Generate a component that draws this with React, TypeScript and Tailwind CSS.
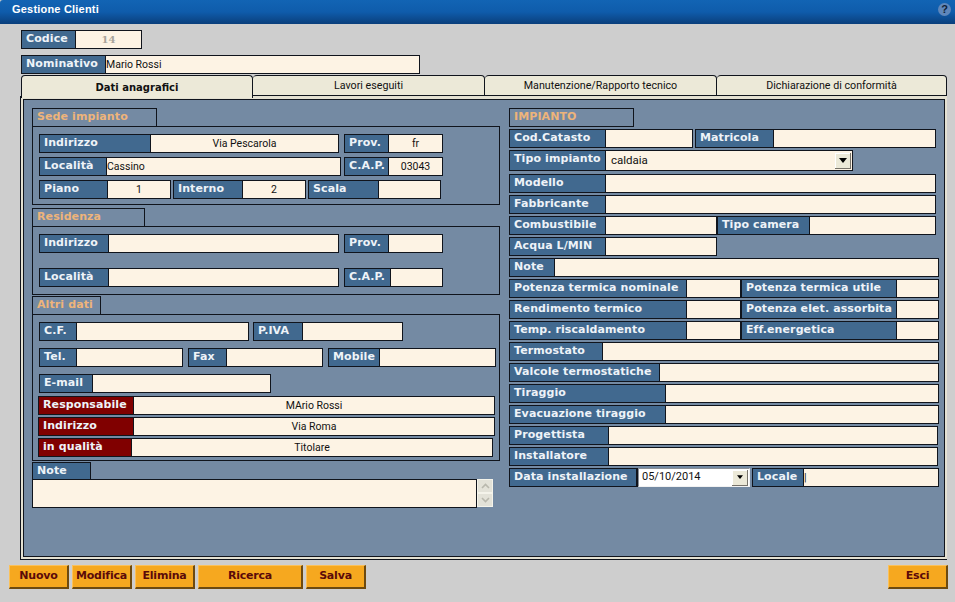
import type { ReactNode } from 'react'

type FieldProps = {
  label: string
  box: string
  labelW: string
  value?: string
  align?: string
  red?: boolean
  children?: ReactNode
}

function Field({ label, box, labelW, value, align = 'text-left', red, children }: FieldProps) {
  return (
    <div className={`flex h-[19px] shrink-0 border border-[#10141c] ${box}`}>
      <div
        className={`h-full shrink-0 border-r border-[#10141c] pl-1 font-['DejaVu_Sans'] text-[11px] leading-[15px] font-bold tracking-[0.1px] whitespace-nowrap text-[#eef3f8] ${labelW} ${red ? 'bg-[#800000]' : 'bg-[#41698f]'}`}
      >
        {label}
      </div>
      {children ?? (
        <div className={`h-full min-w-0 flex-1 truncate bg-[#fdf3e4] font-['Roboto'] text-[10.5px] leading-[17px] text-[#111] ${align}`}>
          {value}
        </div>
      )}
    </div>
  )
}

function SectionTitle({ children, className }: { children: ReactNode; className: string }) {
  return (
    <div className={`h-[19px] border border-[#10141c] pl-1 font-['DejaVu_Sans'] text-[11px] leading-[15px] font-bold tracking-[0.1px] text-[#eeb47a] ${className}`}>
      {children}
    </div>
  )
}

function Tab({ label, active, className }: { label: string; active?: boolean; className: string }) {
  return (
    <div
      className={`flex items-center justify-center rounded-t-[4px] border-t border-r border-[#10141c] bg-[#ece9d8] pt-px text-[#111] ${active ? "h-[23px] border-l font-['DejaVu_Sans'] text-[10px] font-bold" : "h-[21px] border-b font-['Roboto'] text-[10.7px]"} ${className}`}
    >
      {label}
    </div>
  )
}

function ActionButton({ label, className }: { label: string; className: string }) {
  return (
    <button className={`h-[24px] border-t border-l border-t-[#fbc15a] border-l-[#fbc15a] border-r-2 border-b-2 border-r-[#6d4a10] border-b-[#6d4a10] bg-[#f6a81f] font-['DejaVu_Sans'] text-[11px] font-bold tracking-[-0.2px] text-[#5b0a0a] ${className}`}>
      {label}
    </button>
  )
}

function DropArrow({ small }: { small?: boolean }) {
  return (
    <div className="flex h-[16px] w-[16px] items-center justify-center border-r border-b border-r-[#77736a] border-b-[#77736a] bg-[#ece9d8] shadow-[inset_1px_1px_0_#fff]">
      <svg width={small ? 6 : 8} height={small ? 4 : 5} viewBox="0 0 8 5">
        <path d="M0 0h8L4 5z" fill="#000" />
      </svg>
    </div>
  )
}

function ScrollArrow({ up }: { up?: boolean }) {
  return (
    <div className="flex h-[14px] w-[16px] items-center justify-center border border-[#f4f3ea] bg-[#e3e2d8]">
      <svg width="9" height="6" viewBox="0 0 9 6" fill="none">
        <path d={up ? 'M1 5l3.5-3.5L8 5' : 'M1 1l3.5 3.5L8 1'} stroke="#b9b8ad" strokeWidth="1.6" />
      </svg>
    </div>
  )
}

function LeftColumn() {
  return (
    <div className="w-[468px] shrink-0">
      <SectionTitle className="w-[125px]">Sede impianto</SectionTitle>
      <div className="-mt-px h-[79px] border border-[#10141c] pt-[7px] pl-[6px]">
        <div className="flex">
          <Field label="Indirizzo" box="w-[300px]" labelW="w-[111px]" value="Via Pescarola" align="text-center" />
          <Field label="Prov." box="ml-[5px] w-[99px]" labelW="w-[44px]" value="fr" align="text-center" />
        </div>
        <div className="mt-[4px] flex">
          <Field label="Località" box="w-[302px]" labelW="w-[67px]" value="Cassino" />
          <Field label="C.A.P." box="ml-[3px] w-[99px]" labelW="w-[44px]" value="03043" align="text-center" />
        </div>
        <div className="mt-[4px] flex">
          <Field label="Piano" box="w-[132px]" labelW="w-[68px]" value="1" align="text-center" />
          <Field label="Interno" box="ml-[2px] w-[133px]" labelW="w-[69px]" value="2" align="text-center" />
          <Field label="Scala" box="ml-[2px] w-[133px]" labelW="w-[70px]" />
        </div>
      </div>

      <SectionTitle className="mt-[3px] w-[113px]">Residenza</SectionTitle>
      <div className="-mt-px h-[69px] border border-[#10141c] pt-[7px] pl-[6px]">
        <div className="flex">
          <Field label="Indirizzo" box="w-[300px]" labelW="w-[69px]" />
          <Field label="Prov." box="ml-[5px] w-[99px]" labelW="w-[44px]" />
        </div>
        <div className="mt-[15px] flex">
          <Field label="Località" box="w-[300px]" labelW="w-[69px]" />
          <Field label="C.A.P." box="ml-[5px] w-[99px]" labelW="w-[46px]" />
        </div>
      </div>

      <SectionTitle className="mt-px w-[69px]">Altri dati</SectionTitle>
      <div className="-mt-px h-[147px] border border-[#10141c] pt-[7px] pl-[6px]">
        <div className="flex">
          <Field label="C.F." box="w-[210px]" labelW="w-[37px]" />
          <Field label="P.IVA" box="ml-[4px] w-[150px]" labelW="w-[49px]" />
        </div>
        <div className="mt-[7px] flex">
          <Field label="Tel." box="w-[144px]" labelW="w-[37px]" />
          <Field label="Fax" box="ml-[5px] w-[135px]" labelW="w-[38px]" />
          <Field label="Mobile" box="ml-[5px] w-[168px]" labelW="w-[51px]" />
        </div>
        <div className="mt-[7px]">
          <Field label="E-mail" box="w-[232px]" labelW="w-[53px]" />
        </div>
        <div className="mt-[3px] -ml-px">
          <Field red label="Responsabile" box="w-[457px]" labelW="w-[95px]" value="MArio Rossi" align="text-center" />
        </div>
        <div className="mt-[2px] -ml-px">
          <Field red label="Indirizzo" box="w-[457px]" labelW="w-[95px]" value="Via Roma" align="text-center" />
        </div>
        <div className="mt-[2px] -ml-px">
          <Field red label="in qualità" box="w-[455px]" labelW="w-[93px]" value="Titolare" align="text-center" />
        </div>
      </div>

      <SectionTitle className="mt-px !h-[18px] w-[59px] bg-[#41698f] !text-[#eef3f8]">Note</SectionTitle>
      <div className="-mt-px flex">
        <div className="h-[29px] w-[445px] border border-[#10141c] bg-[#fdf3e4]" />
        <div className="flex w-[17px] flex-col">
          <ScrollArrow up />
          <ScrollArrow />
        </div>
      </div>
    </div>
  )
}

function RightColumn() {
  const full = 'w-[427px]'
  const wide = 'w-[430px]'
  return (
    <div className="ml-[9px] w-[430px] shrink-0">
      <SectionTitle className="w-[125px]">IMPIANTO</SectionTitle>
      <div className="mt-[2px] flex">
        <Field label="Cod.Catasto" box="w-[184px]" labelW="w-[96px]" />
        <Field label="Matricola" box="ml-[2px] w-[241px]" labelW="w-[78px]" />
      </div>
      <div className="mt-[2px]">
        <Field label="Tipo impianto" box="!h-[21px] w-[344px]" labelW="w-[96px]">
          <div className="flex h-full flex-1 items-center justify-between bg-[#fdf3e4] pr-[1px] pl-[5px] font-['Roboto'] text-[11.5px] text-[#111]">
            caldaia
            <DropArrow />
          </div>
        </Field>
      </div>
      <div className="mt-[3px]">
        <Field label="Modello" box={full} labelW="w-[96px]" />
      </div>
      <div className="mt-[2px]">
        <Field label="Fabbricante" box={full} labelW="w-[96px]" />
      </div>
      <div className="mt-[2px] flex">
        <Field label="Combustibile" box="w-[208px]" labelW="w-[96px]" />
        <Field label="Tipo camera" box="w-[219px]" labelW="w-[92px]" />
      </div>
      <div className="mt-[2px]">
        <Field label="Acqua L/MIN" box="w-[208px]" labelW="w-[96px]" />
      </div>
      <div className="mt-[2px]">
        <Field label="Note" box={wide} labelW="w-[45px]" />
      </div>
      <div className="mt-[2px] flex">
        <Field label="Potenza termica nominale" box="w-[232px]" labelW="w-[177px]" />
        <Field label="Potenza termica utile" box="w-[198px]" labelW="w-[155px]" />
      </div>
      <div className="mt-[2px] flex">
        <Field label="Rendimento termico" box="w-[232px]" labelW="w-[177px]" />
        <Field label="Potenza elet. assorbita" box="w-[198px]" labelW="w-[155px]" />
      </div>
      <div className="mt-[2px] flex">
        <Field label="Temp. riscaldamento" box="w-[232px]" labelW="w-[177px]" />
        <Field label="Eff.energetica" box="w-[198px]" labelW="w-[155px]" />
      </div>
      <div className="mt-[2px]">
        <Field label="Termostato" box={wide} labelW="w-[93px]" />
      </div>
      <div className="mt-[2px]">
        <Field label="Valcole termostatiche" box={wide} labelW="w-[150px]" />
      </div>
      <div className="mt-[2px]">
        <Field label="Tiraggio" box={wide} labelW="w-[156px]" />
      </div>
      <div className="mt-[2px]">
        <Field label="Evacuazione tiraggio" box={wide} labelW="w-[156px]" />
      </div>
      <div className="mt-[2px]">
        <Field label="Progettista" box="w-[429px]" labelW="w-[99px]" />
      </div>
      <div className="mt-[2px]">
        <Field label="Installatore" box="w-[429px]" labelW="w-[99px]" />
      </div>
      <div className="mt-[2px] flex">
        <Field label="Data installazione" box="w-[129px]" labelW="w-[127px]">
          <span />
        </Field>
        <div className="flex h-[19px] w-[112px] items-center justify-between border border-t-[#8a8f96] border-r-[#f2f2f2] border-b-[#f2f2f2] border-l-[#8a8f96] bg-white pr-[1px] pl-[3px] font-['Roboto'] text-[11px] text-[#111]">
          05/10/2014
          <DropArrow small />
        </div>
        <Field label="Locale" box="ml-[2px] w-[187px]" labelW="w-[51px]" value="|" />
      </div>
    </div>
  )
}

export default function App() {
  return (
    <div className="flex h-[602px] w-[955px] flex-col overflow-hidden bg-[#cecece]">
      <header className="flex h-[24px] shrink-0 items-start justify-between rounded-tl-[3px] bg-gradient-to-b from-[#1264b4] via-[#0f5cab] to-[#0a3f7c] pt-[2px] pr-[4px] pl-[12px]">
        <span className="font-['Liberation_Sans'] text-[11px] leading-[14px] font-bold tracking-[0.2px] text-white">Gestione Clienti</span>
        <span className="mt-px flex h-[13px] w-[13px] items-center justify-center rounded-full bg-[#5f87bb] font-['Liberation_Sans'] text-[11px] font-bold text-[#0d2038]">?</span>
      </header>

      <main className="flex-1 pl-[21px]">
        <div className="mt-[6px]">
          <Field label="Codice" box="w-[121px]" labelW="w-[54px]">
            <div className="flex-1 bg-[#fdf3e4] text-center font-['DejaVu_Serif'] text-[10px] leading-[17px] font-bold text-[#a8a49b]">14</div>
          </Field>
        </div>
        <div className="mt-[6px]">
          <Field label="Nominativo" box="w-[399px]" labelW="w-[84px]" value="Mario Rossi" />
        </div>

        <div className="mt-px flex h-[21px] w-[926px] items-start">
          <Tab active label="Dati anagrafici" className="relative z-10 w-[232px]" />
          <Tab label="Lavori eseguiti" className="w-[232px]" />
          <Tab label="Manutenzione/Rapporto tecnico" className="w-[232px]" />
          <Tab label="Dichiarazione di conformità" className="w-[230px]" />
        </div>

        <div className="-ml-px h-[464px] w-[927px] border-b border-l border-[#10141c] bg-[#e4e1d2] pt-[3px] pr-[2px] pb-[2px] pl-[2px]">
          <div className="flex h-full border border-[#10141c] bg-[#748aa3] pt-[8px] pl-[8px]">
            <LeftColumn />
            <RightColumn />
          </div>
        </div>
      </main>

      <footer className="flex h-[39px] shrink-0 pt-[2px] pl-[9px]">
        <ActionButton label="Nuovo" className="w-[60px]" />
        <ActionButton label="Modifica" className="ml-[3px] w-[60px]" />
        <ActionButton label="Elimina" className="ml-[3px] w-[60px]" />
        <ActionButton label="Ricerca" className="ml-[3px] w-[105px]" />
        <ActionButton label="Salva" className="ml-[3px] w-[60px]" />
        <ActionButton label="Esci" className="ml-[522px] w-[60px]" />
      </footer>
    </div>
  )
}
